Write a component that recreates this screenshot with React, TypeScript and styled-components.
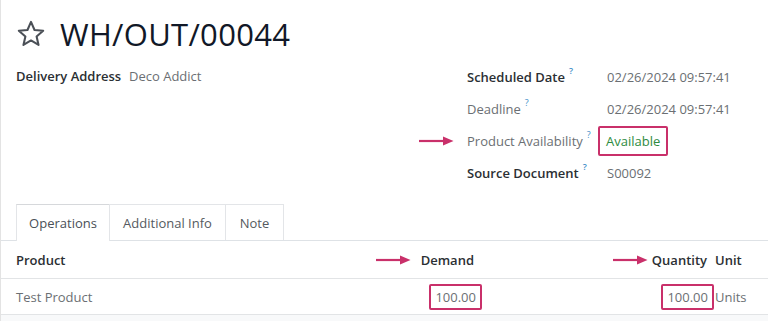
import React from "react";
import styled, { createGlobalStyle } from "styled-components";

const PINK = "#c9306a";

const Global = createGlobalStyle`
  html, body { margin: 0; padding: 0; background: #fff; }
  body { font-family: "Open Sans", "Noto Sans", sans-serif; color: #212529; }
  * { box-sizing: border-box; }
`;

const Sheet = styled.div`
  width: 768px;
  height: 321px;
  overflow: hidden;
  border-left: 1px solid #e3e3e3;
  background: #fff;
`;

const TitleRow = styled.div`
  display: flex;
  align-items: center;
  gap: 14px;
  padding: 15px 0 0 15px;
  height: 52px;
`;

const Title = styled.h1`
  margin: 0;
  font-size: 31px;
  font-weight: 500;
  color: #111827;
  letter-spacing: 0.3px;
  line-height: 38px;
`;

const Groups = styled.div`
  display: grid;
  grid-template-columns: 451px 1fr;
  padding: 8px 0 0 15px;
  height: 152px;
`;

const FieldList = styled.div`
  display: flex;
  flex-direction: column;
`;

const Field = styled.div<{ $h?: number; $wide?: boolean }>`
  display: grid;
  grid-template-columns: ${(p) => (p.$wide ? "140px" : "113px")} 1fr;
  align-items: center;
  height: ${(p) => p.$h ?? 31}px;
  font-size: 13px;
`;

const Label = styled.span<{ $muted?: boolean }>`
  font-weight: ${(p) => (p.$muted ? 400 : 600)};
  color: ${(p) => (p.$muted ? "#6b6f73" : "#2b2f33")};
  position: relative;
  display: flex;
  align-items: center;
`;

const Help = styled.sup`
  color: #3f8fc9;
  font-size: 9px;
  margin-left: 4px;
  align-self: flex-start;
  margin-top: -4px;
`;

const Value = styled.span<{ $green?: boolean }>`
  color: ${(p) => (p.$green ? "#2e8b3f" : "#6b6f73")};
`;

const Boxed = styled.span`
  display: inline-block;
  border: 2px solid ${PINK};
  border-radius: 2px;
  padding: 4px 6px;
  margin-left: -9px;
`;

const ArrowWrap = styled.span<{ $left: number }>`
  position: absolute;
  left: ${(p) => p.$left}px;
  top: 50%;
  transform: translateY(-50%);
  display: flex;
`;

const Arrow = () => (
  <svg width="35" height="10" viewBox="0 0 35 10">
    <line x1="0" y1="5" x2="25" y2="5" stroke={PINK} strokeWidth="2.2" />
    <path d="M24 0.5 L34.5 5 L24 9.5 Z" fill={PINK} />
  </svg>
);

const Tabs = styled.div`
  display: flex;
  padding-left: 15px;
  height: 37px;
  align-items: flex-end;
  border-bottom: 1px solid #dee2e6;
`;

const Tab = styled.div<{ $w: number; $active?: boolean }>`
  width: ${(p) => p.$w}px;
  height: 36px;
  display: flex;
  align-items: center;
  justify-content: center;
  font-size: 13px;
  color: ${(p) => (p.$active ? "#495057" : "#555a60")};
  border: 1px solid #e3e5e8;
  border-bottom: none;
  margin-right: -1px;
  background: #fff;
  ${(p) => (p.$active ? "border-top-color: #d6d8db; margin-bottom: -1px; height: 37px;" : "")}
`;

const Row = styled.div<{ $head?: boolean }>`
  display: grid;
  grid-template-columns: 1fr 100px 231px 53px;
  align-items: center;
  height: ${(p) => (p.$head ? 38 : 36)}px;
  border-bottom: 1px solid #e2e4e6;
  font-size: 13px;
  padding-left: 15px;
`;

const Cell = styled.div<{ $right?: boolean; $bold?: boolean; $muted?: boolean; $pad?: number }>`
  position: relative;
  display: flex;
  align-items: center;
  justify-content: ${(p) => (p.$right ? "flex-end" : "flex-start")};
  font-weight: ${(p) => (p.$bold ? 600 : 400)};
  color: ${(p) => (p.$muted ? "#6b6f73" : "#2b2f33")};
  padding-right: ${(p) => p.$pad ?? 0}px;
`;

const NumBox = styled.span`
  display: inline-block;
  border: 2px solid ${PINK};
  border-radius: 2px;
  padding: 2px 4px;
`;

const HeadLabel = styled.span`
  position: relative;
  display: inline-flex;
  align-items: center;
`;

const Footer = styled.div`
  height: 20px;
  background: #f8f9fa;
`;

const Star = () => (
  <svg width="30" height="28" viewBox="0 0 24 23">
    <path
      d="M12 1.6 L14.9 8.2 L22 8.8 L16.6 13.5 L18.2 20.5 L12 16.8 L5.8 20.5 L7.4 13.5 L2 8.8 L9.1 8.2 Z"
      fill="none"
      stroke="#4b5057"
      strokeWidth="1.7"
      strokeLinejoin="round"
    />
  </svg>
);

export default function App() {
  return (
    <>
      <Global />
      <Sheet>
        <TitleRow>
          <Star />
          <Title>WH/OUT/00044</Title>
        </TitleRow>
        <Groups>
          <FieldList>
            <Field>
              <Label>Delivery Address</Label>
              <Value>Deco Addict</Value>
            </Field>
          </FieldList>
          <FieldList>
            <Field $wide $h={33}>
              <Label>
                Scheduled Date<Help>?</Help>
              </Label>
              <Value>02/26/2024 09:57:41</Value>
            </Field>
            <Field $wide $h={32}>
              <Label $muted>
                Deadline<Help>?</Help>
              </Label>
              <Value>02/26/2024 09:57:41</Value>
            </Field>
            <Field $wide $h={32}>
              <Label $muted>
                <ArrowWrap $left={-48}>
                  <Arrow />
                </ArrowWrap>
                Product Availability<Help>?</Help>
              </Label>
              <Value $green>
                <Boxed>Available</Boxed>
              </Value>
            </Field>
            <Field $wide $h={31}>
              <Label>
                Source Document<Help>?</Help>
              </Label>
              <Value>S00092</Value>
            </Field>
          </FieldList>
        </Groups>
        <Tabs>
          <Tab $w={94} $active>Operations</Tab>
          <Tab $w={117}>Additional Info</Tab>
          <Tab $w={59}>Note</Tab>
        </Tabs>
        <Row $head>
          <Cell $bold>Product</Cell>
          <Cell $bold $right $pad={10}>
            <HeadLabel>
              <ArrowWrap $left={-45}>
                <Arrow />
              </ArrowWrap>
              Demand
            </HeadLabel>
          </Cell>
          <Cell $bold $right $pad={8}>
            <HeadLabel>
              <ArrowWrap $left={-39}>
                <Arrow />
              </ArrowWrap>
              Quantity
            </HeadLabel>
          </Cell>
          <Cell $bold>Unit</Cell>
        </Row>
        <Row>
          <Cell $muted>Test Product</Cell>
          <Cell $muted $right $pad={2}>
            <NumBox>100.00</NumBox>
          </Cell>
          <Cell $muted $right $pad={1}>
            <NumBox>100.00</NumBox>
          </Cell>
          <Cell $muted>Units</Cell>
        </Row>
        <Footer />
      </Sheet>
    </>
  );
}
